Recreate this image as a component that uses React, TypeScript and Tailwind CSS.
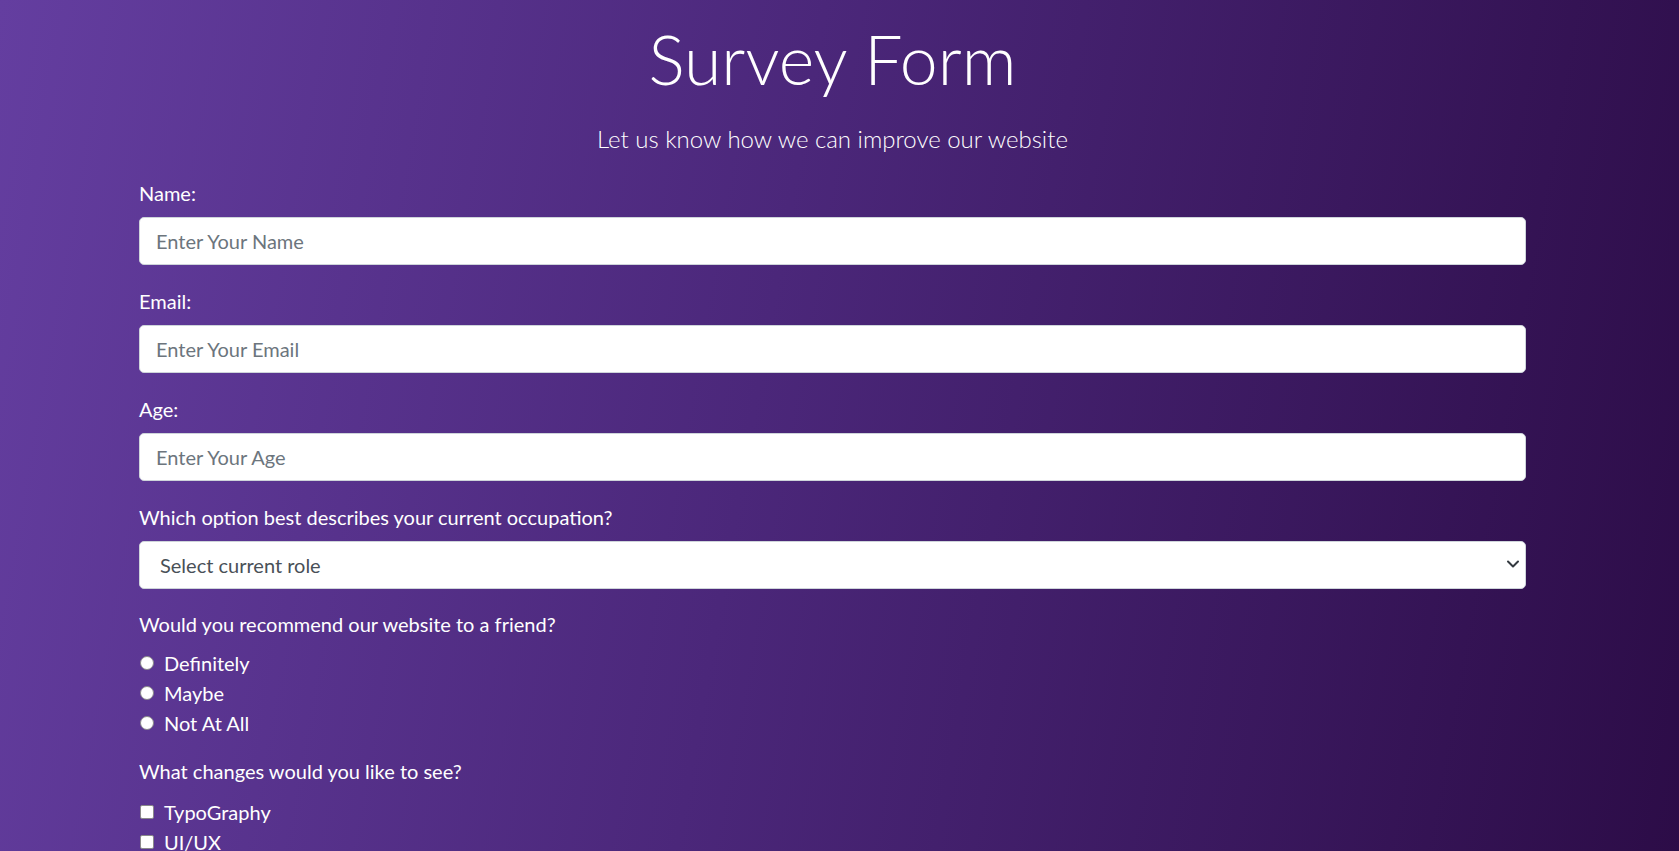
import React from "react";

const Field = ({ label, placeholder }: { label: string; placeholder: string }) => {
  return (
    <div className="mb-[21px]">
      <label className="block h-[30px] leading-[30px] text-[20px] mb-[9px] text-white">{label}</label>
      <input
        type="text"
        placeholder={placeholder}
        className="block w-full h-[48px] px-[16px] text-[20px] bg-white border border-[#ced4da] rounded-[5px] text-[#212529] placeholder:text-[#6c757d] outline-none"
      />
    </div>
  );
};

const Option = ({ type, name, label }: { type: string; name: string; label: string }) => {
  const box =
    type === "radio"
      ? "appearance-none m-0 ml-[1px] w-[14px] h-[14px] rounded-full bg-white border border-[#8a8a8a] shrink-0"
      : "appearance-none m-0 ml-[1px] w-[14px] h-[14px] rounded-[2px] bg-white border border-[#8a8a8a] shrink-0";
  return (
    <label className="flex items-center h-[30px] text-[20px] text-white">
      <input type={type} name={name} className={box} />
      <span className="ml-[10px]">{label}</span>
    </label>
  );
};

export default function App() {
  return (
    <div className="min-h-screen w-full bg-[linear-gradient(100deg,#643ea0_0%,#4b277a_45%,#2c0c47_100%)] font-['Lato','Liberation_Sans',sans-serif] overflow-hidden">
      <div className="pl-[139px] pr-[153px]">
        <h1 className="pt-[16px] text-center text-[68px] leading-[86px] font-light text-white">Survey Form</h1>
        <p className="mt-[19px] text-center text-[24px] leading-[36px] font-light text-white">
          Let us know how we can improve our website
        </p>

        <form className="mt-[21px]">
          <Field label="Name:" placeholder="Enter Your Name" />
          <Field label="Email:" placeholder="Enter Your Email" />
          <Field label="Age:" placeholder="Enter Your Age" />

          <div className="mb-[20px]">
            <label className="block h-[30px] leading-[30px] text-[20px] mb-[9px] text-white">
              Which option best describes your current occupation?
            </label>
            <div className="relative">
              <select className="block w-full h-[48px] pl-[20px] pr-[40px] text-[20px] bg-white border border-[#ced4da] rounded-[5px] text-[#495057] appearance-none outline-none">
                <option>Select current role</option>
                <option>Student</option>
                <option>Full Time Job</option>
                <option>Full Time Learner</option>
                <option>Prefer not to say</option>
                <option>Other</option>
              </select>
              <svg
                className="absolute right-[6px] top-[18px] pointer-events-none"
                width="14"
                height="10"
                viewBox="0 0 14 10"
                fill="none"
              >
                <path d="M2 2.5l5 5 5-5" stroke="#343a40" strokeWidth="2" strokeLinecap="round" strokeLinejoin="round" />
              </svg>
            </div>
          </div>

          <div className="mb-[18px]">
            <p className="h-[30px] leading-[30px] text-[20px] mb-[9px] text-white">
              Would you recommend our website to a friend?
            </p>
            <Option type="radio" name="recommend" label="Definitely" />
            <Option type="radio" name="recommend" label="Maybe" />
            <Option type="radio" name="recommend" label="Not At All" />
          </div>

          <div>
            <p className="h-[30px] leading-[30px] text-[20px] mb-[11px] text-white">What changes would you like to see?</p>
            <Option type="checkbox" name="changes" label="TypoGraphy" />
            <Option type="checkbox" name="changes" label="UI/UX" />
            <Option type="checkbox" name="changes" label="Colors" />
          </div>
        </form>
      </div>
    </div>
  );
}
